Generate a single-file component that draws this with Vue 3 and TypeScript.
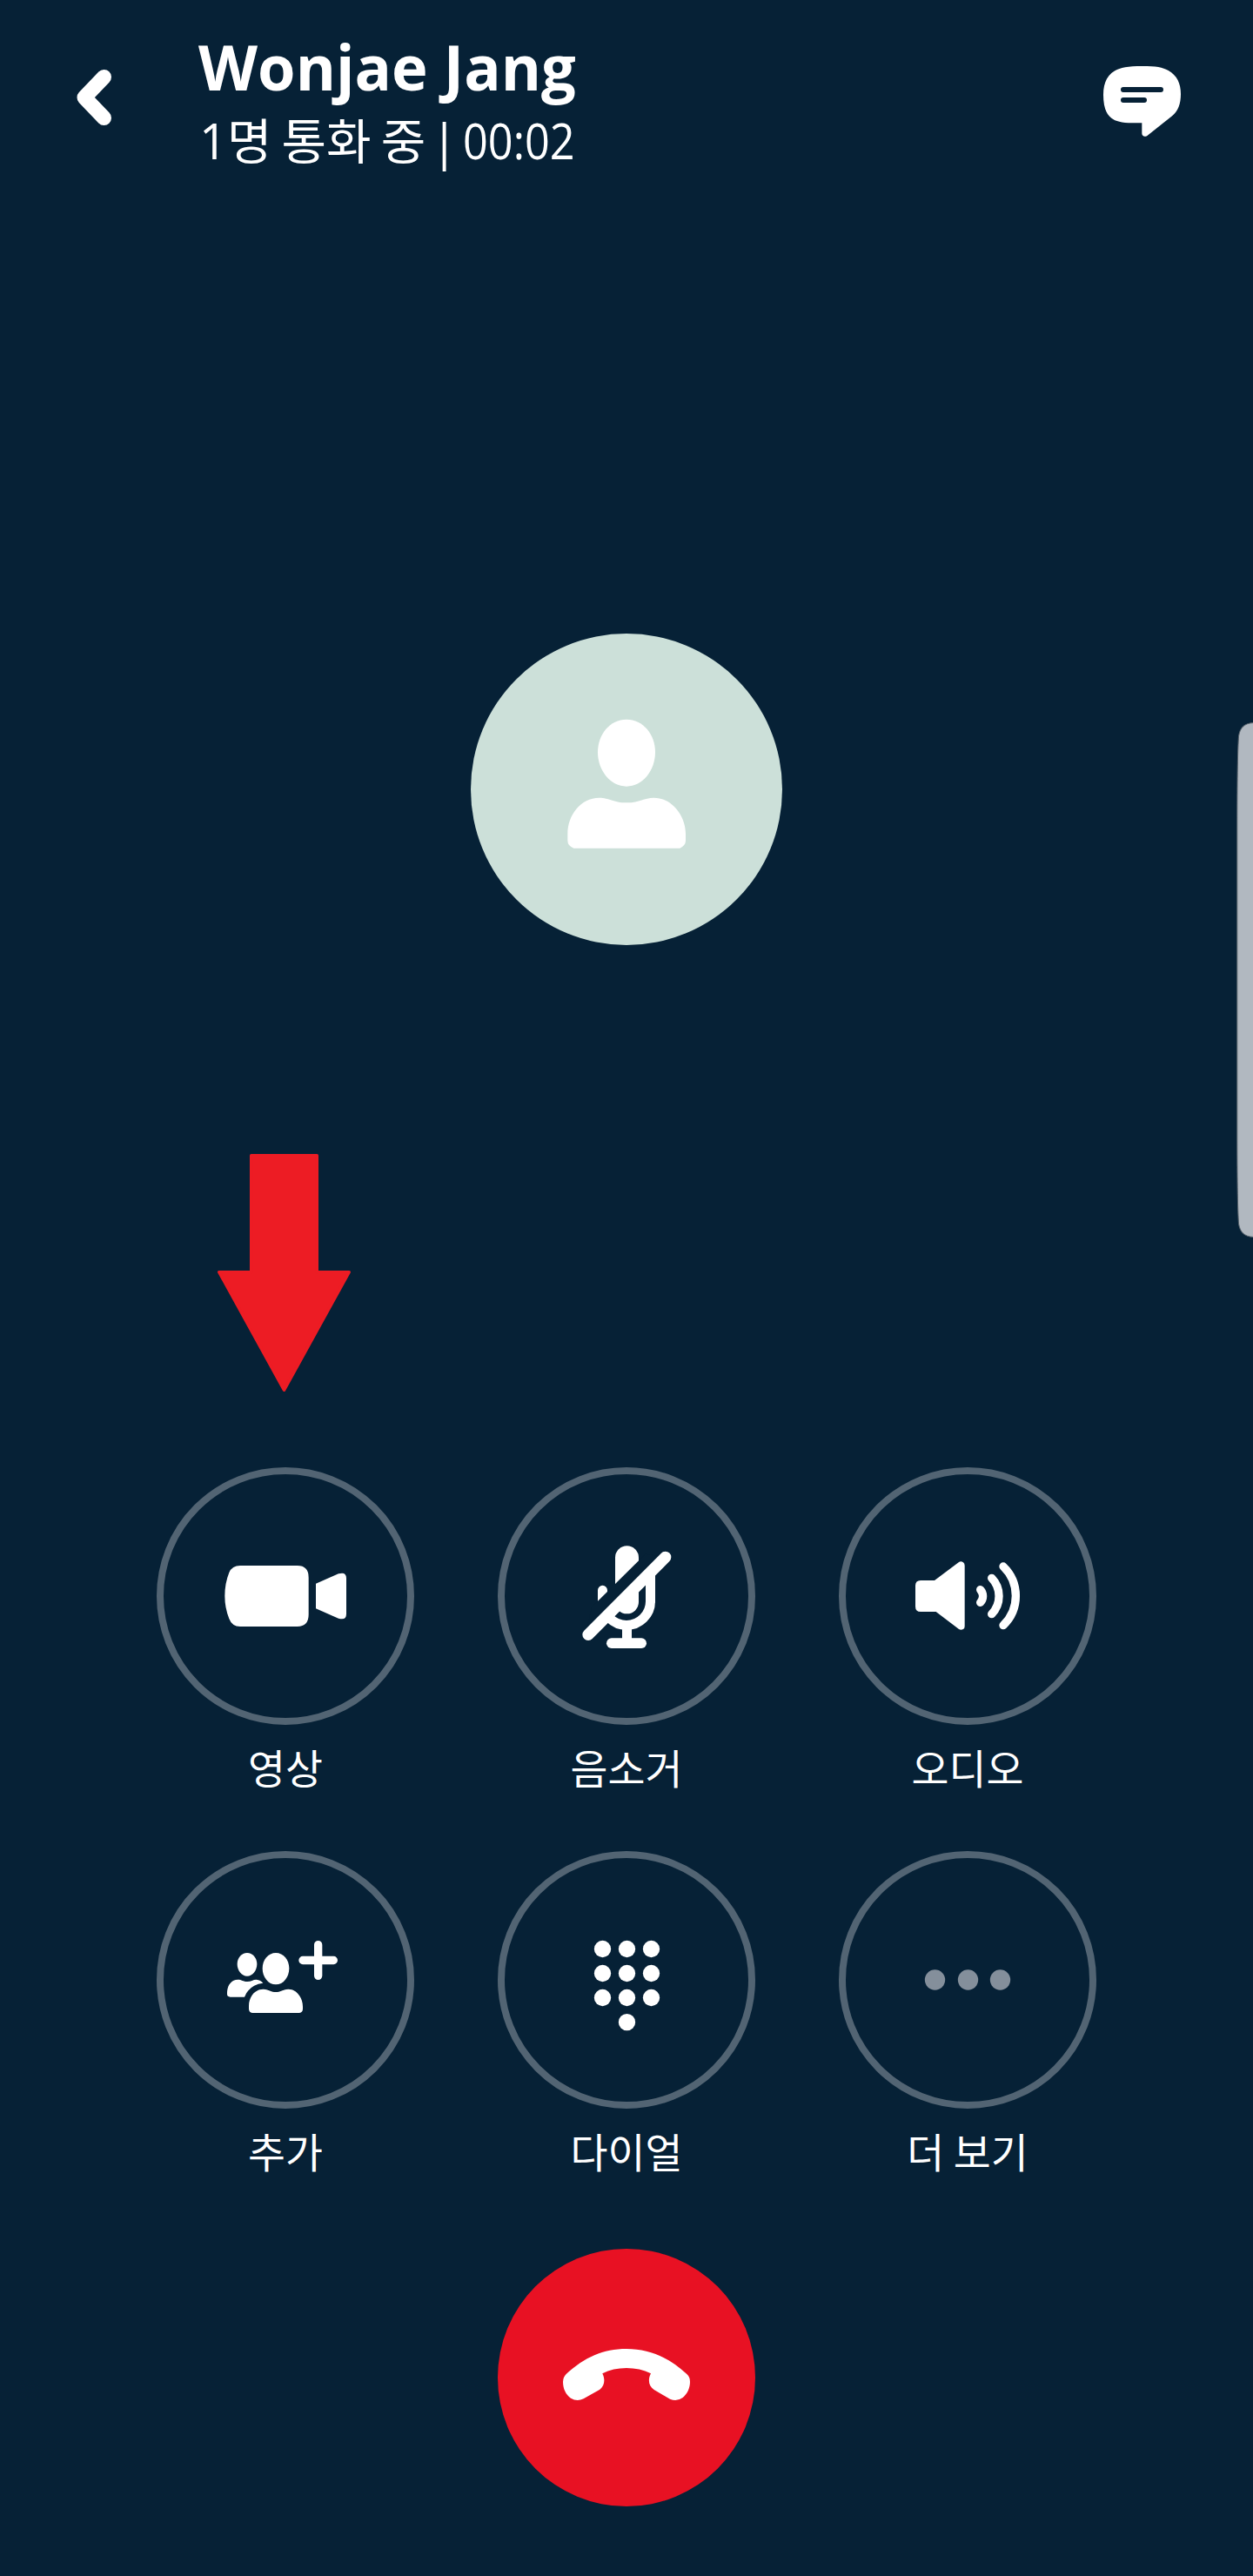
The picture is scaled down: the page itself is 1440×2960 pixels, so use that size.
<script setup lang="ts">
interface CallAction {
  id: 'video' | 'mute' | 'audio' | 'add' | 'dial' | 'more'
  label: string
  viewBox: string
}

const contact = 'Wonjae Jang'
const status = '1명 통화 중'
const elapsed = '00:02'

const actions: CallAction[] = [
  { id: 'video', label: '영상', viewBox: '54 72 840 840' },
  { id: 'mute', label: '음소거', viewBox: '60 72 840 840' },
  { id: 'audio', label: '오디오', viewBox: '66 72 840 840' },
  { id: 'add', label: '추가', viewBox: '54 75 840 840' },
  { id: 'dial', label: '다이얼', viewBox: '60 75 840 840' },
  { id: 'more', label: '더 보기', viewBox: '66 75 840 840' },
]

const dialDots: [number, number][] = [
  [397.5, 388.5], [481.5, 388.5], [565.5, 388.5],
  [397.5, 472.5], [481.5, 472.5], [565.5, 472.5],
  [397.5, 556.5], [481.5, 556.5], [565.5, 556.5],
  [481.5, 641],
]
</script>

<template>
  <main class="call">
    <header class="top">
      <button class="back" aria-label="back">
        <svg width="40" height="64" viewBox="88 80 40 64">
          <path d="M119.5 88.5 97 112 119.5 135.5" fill="none" stroke="#fff" stroke-width="17" stroke-linecap="round" stroke-linejoin="round" />
        </svg>
      </button>
      <div class="who">
        <h1><span class="name">{{ contact }}</span></h1>
        <p><span>{{ status }}</span><span class="bar">|</span><span class="time">{{ elapsed }}</span></p>
      </div>
      <button class="chat" aria-label="chat">
        <svg width="89" height="81" viewBox="84 78 267 243">
          <path fill="#fff" d="M218 78C266 78 288 82 308 93C338 110 351 138 351 174C351 208 342 232 321 250L238 316C229 324 217 321 217 310V274H185C145 273 127 268 112 257C92 242 84 214 84 176C84 136 98 108 124 94C143 83 168 78 218 78Z" />
          <path d="M153 159H282M153 195H225" stroke="#062136" stroke-width="18" stroke-linecap="round" />
        </svg>
      </button>
    </header>

    <section class="stage">
      <div class="avatar">
        <svg width="358" height="358" viewBox="33 54 1074 1074" fill="#fff">
          <path d="M570 350C627 350 669 401 669 463C669 527 625 581 570 581C515 581 471 527 471 463C471 401 513 350 570 350Z" />
          <path d="M367 744C367 680 412 620 476 620C511 620 523 637 571 637C617 637 630 620 664 620C726 620 774 682 774 744V768Q774 784 754 794H388Q367 786 367 768Z" />
        </svg>
      </div>
    </section>

    <section class="actions">
      <div v-for="a in actions" :key="a.id" class="action">
        <button class="ring" :aria-label="a.label">
          <svg width="280" height="280" :viewBox="a.viewBox" fill="#fff">
            <template v-if="a.id === 'video'">
              <path d="M318 387H515Q554 387 554 428V556Q554 597 515 597H318Q290 597 280 570Q265 532 265 492Q265 448 280 411Q290 387 318 387Z" />
              <path d="M579 449 657 415Q684 407 684 430V554Q684 577 657 569L579 535Z" />
            </template>
            <template v-else-if="a.id === 'mute'">
              <rect x="441" y="319" width="81" height="234" rx="40.5" />
              <path d="M397.5 472V510A82.5 82.5 0 0 0 480 592.5A82.5 82.5 0 0 0 562.5 510" fill="none" stroke="#fff" stroke-width="33" stroke-linecap="round" />
              <rect x="546" y="405" width="33" height="110" />
              <path fill="#062136" d="M545 347 360 530 340 620 347 626 613 358Z" />
              <path d="M614 358 348 625" stroke="#fff" stroke-width="40" stroke-linecap="round" />
              <rect x="465" y="598" width="33" height="50" />
              <rect x="411" y="637" width="138" height="35" rx="17.5" />
            </template>
            <template v-else-if="a.id === 'audio'">
              <path d="M324 438H372L456 375Q463 370 471 376Q476 380 476 387V596Q476 603 471 606Q463 611 456 606L377 546H324Q306 546 306 528V456Q306 438 324 438Z" />
              <path d="M530 470A32 32 0 0 1 530 514M569 430A89 89 0 0 1 569 554M609 390A141 141 0 0 1 609 593" fill="none" stroke="#fff" stroke-width="28" stroke-linecap="round" />
            </template>
            <template v-else-if="a.id === 'add'">
              <path d="M342 402C361 402 376 420 376 440C376 462 361 482 342 482C323 482 308 462 308 440C308 420 323 402 342 402Z" />
              <path d="M441 402C467 402 487 426 487 455C487 485 467 511 441 511C415 511 395 485 395 455C395 426 415 402 441 402Z" />
              <path d="M273 540C273 515 287 494 310 494C323 494 328 501 343 501C356 501 362 494 374 494Q389 495 397 506Q350 511 333 554H284Q273 554 273 544Z" />
              <path d="M348 585C348 554 368 527 398 527C414 527 421 537 441 537C460 537 468 527 484 527C513 527 534 557 534 587V595Q534 608 522 609H360Q348 607 348 595Z" />
              <path d="M587 374V481M534 427.500H640" fill="none" stroke="#fff" stroke-width="28" stroke-linecap="round" />
            </template>
            <template v-else-if="a.id === 'dial'">
              <circle v-for="([x, y], i) in dialDots" :key="i" :cx="x" :cy="y" r="29" />
            </template>
            <template v-else>
              <g fill="#848f9b">
                <circle cx="373.500" cy="495" r="35" />
                <circle cx="487.500" cy="495" r="35" />
                <circle cx="598.500" cy="495" r="35" />
              </g>
            </template>
          </svg>
        </button>
        <span class="label">{{ a.label }}</span>
      </div>
    </section>

    <footer class="bottom">
      <button class="hangup" aria-label="end call">
        <svg width="296" height="296" viewBox="36 42 888 888">
          <path fill="#fff" d="M480 387C558 387 625 416 688 474Q699 484 699 500C699 522 690 541 674 555Q654 570 630 560L575 528C556 516 553 492 564 472Q526 453 480 453Q434 453 397 472C407 492 405 514 388 527L332 559Q309 570 288 557C270 544 261 524 261 501Q261 485 272 474C335 416 400 387 480 387Z" />
        </svg>
      </button>
    </footer>

    <svg class="pointer" width="153" height="274" viewBox="60 78 459 822">
      <path d="M176 83H403V485H514L289.500 892 65 485H176Z" fill="#ed1c24" stroke="#ed1c24" stroke-width="10" stroke-linejoin="round" />
    </svg>
    <svg class="edge-handle" width="19" height="592" viewBox="0 0 19 592">
      <path d="M20 .5C8 1 4 7 2.500 16C1.500 30 .8 60 .8 120V472C.8 532 1.500 562 2.500 576C4 585 8 591 20 591.500Z" fill="#b1b8c0" stroke="#59646d" />
    </svg>
  </main>
</template>

<style>
body {
  margin: 0;
  background: #062136;
}
</style>

<style scoped>
.call {
  position: relative;
  display: flex;
  flex-direction: column;
  width: 1440px;
  height: 2960px;
  overflow: hidden;
  background: #062136;
  color: #fff;
  font-family: "Open Sans", "Noto Sans CJK KR", sans-serif;
}
button {
  display: block;
  box-sizing: border-box;
  margin: 0;
  padding: 0;
  border: 0;
  background: none;
  color: inherit;
  font: inherit;
}
svg {
  display: block;
}
.top {
  display: flex;
  align-items: flex-start;
  box-sizing: border-box;
  height: 224px;
  padding: 26px 83px 0 88px;
}
.back {
  margin-top: 54px;
}
.who {
  flex: 1;
  padding-left: 100px;
}
.who h1,
.who p {
  margin: 0;
  white-space: nowrap;
}
.who h1 {
  height: 100px;
  font-size: 72px;
  line-height: 100px;
  font-weight: 700;
}
.who p {
  display: flex;
  height: 70px;
  padding-left: 1px;
  font-size: 56px;
  line-height: 70px;
  font-weight: 400;
  word-spacing: -3.5px;
}
.name,
.time {
  display: inline-block;
  transform-origin: left center;
}
.name {
  transform: scaleX(0.978);
}
.bar {
  margin: 0 6px;
}
.time {
  transform: scaleX(0.9);
}
.chat {
  margin-top: 50px;
}
.stage {
  display: flex;
  justify-content: center;
  align-items: flex-start;
  box-sizing: border-box;
  height: 1462px;
  padding-top: 504px;
}
.avatar {
  width: 358px;
  height: 358px;
  border-radius: 50%;
  background: #cce0d9;
}
.actions {
  display: grid;
  grid-template-columns: repeat(3, 296px);
  grid-auto-rows: 441px;
  column-gap: 96px;
  justify-content: center;
}
.action {
  display: flex;
  flex-direction: column;
  align-items: center;
}
.ring {
  width: 296px;
  height: 296px;
  border: 8px solid #526473;
  border-radius: 50%;
}
.label {
  margin-top: 13px;
  font-family: "Noto Sans CJK KR", sans-serif;
  font-size: 46.7px;
  line-height: 70px;
  white-space: nowrap;
}
.bottom {
  display: flex;
  justify-content: center;
  padding-top: 16px;
}
.hangup {
  width: 296px;
  height: 296px;
  border-radius: 50%;
  background: #e81123;
}
.pointer {
  position: absolute;
  left: 250px;
  top: 1326px;
}
.edge-handle {
  position: absolute;
  right: 0;
  top: 830px;
}
</style>
